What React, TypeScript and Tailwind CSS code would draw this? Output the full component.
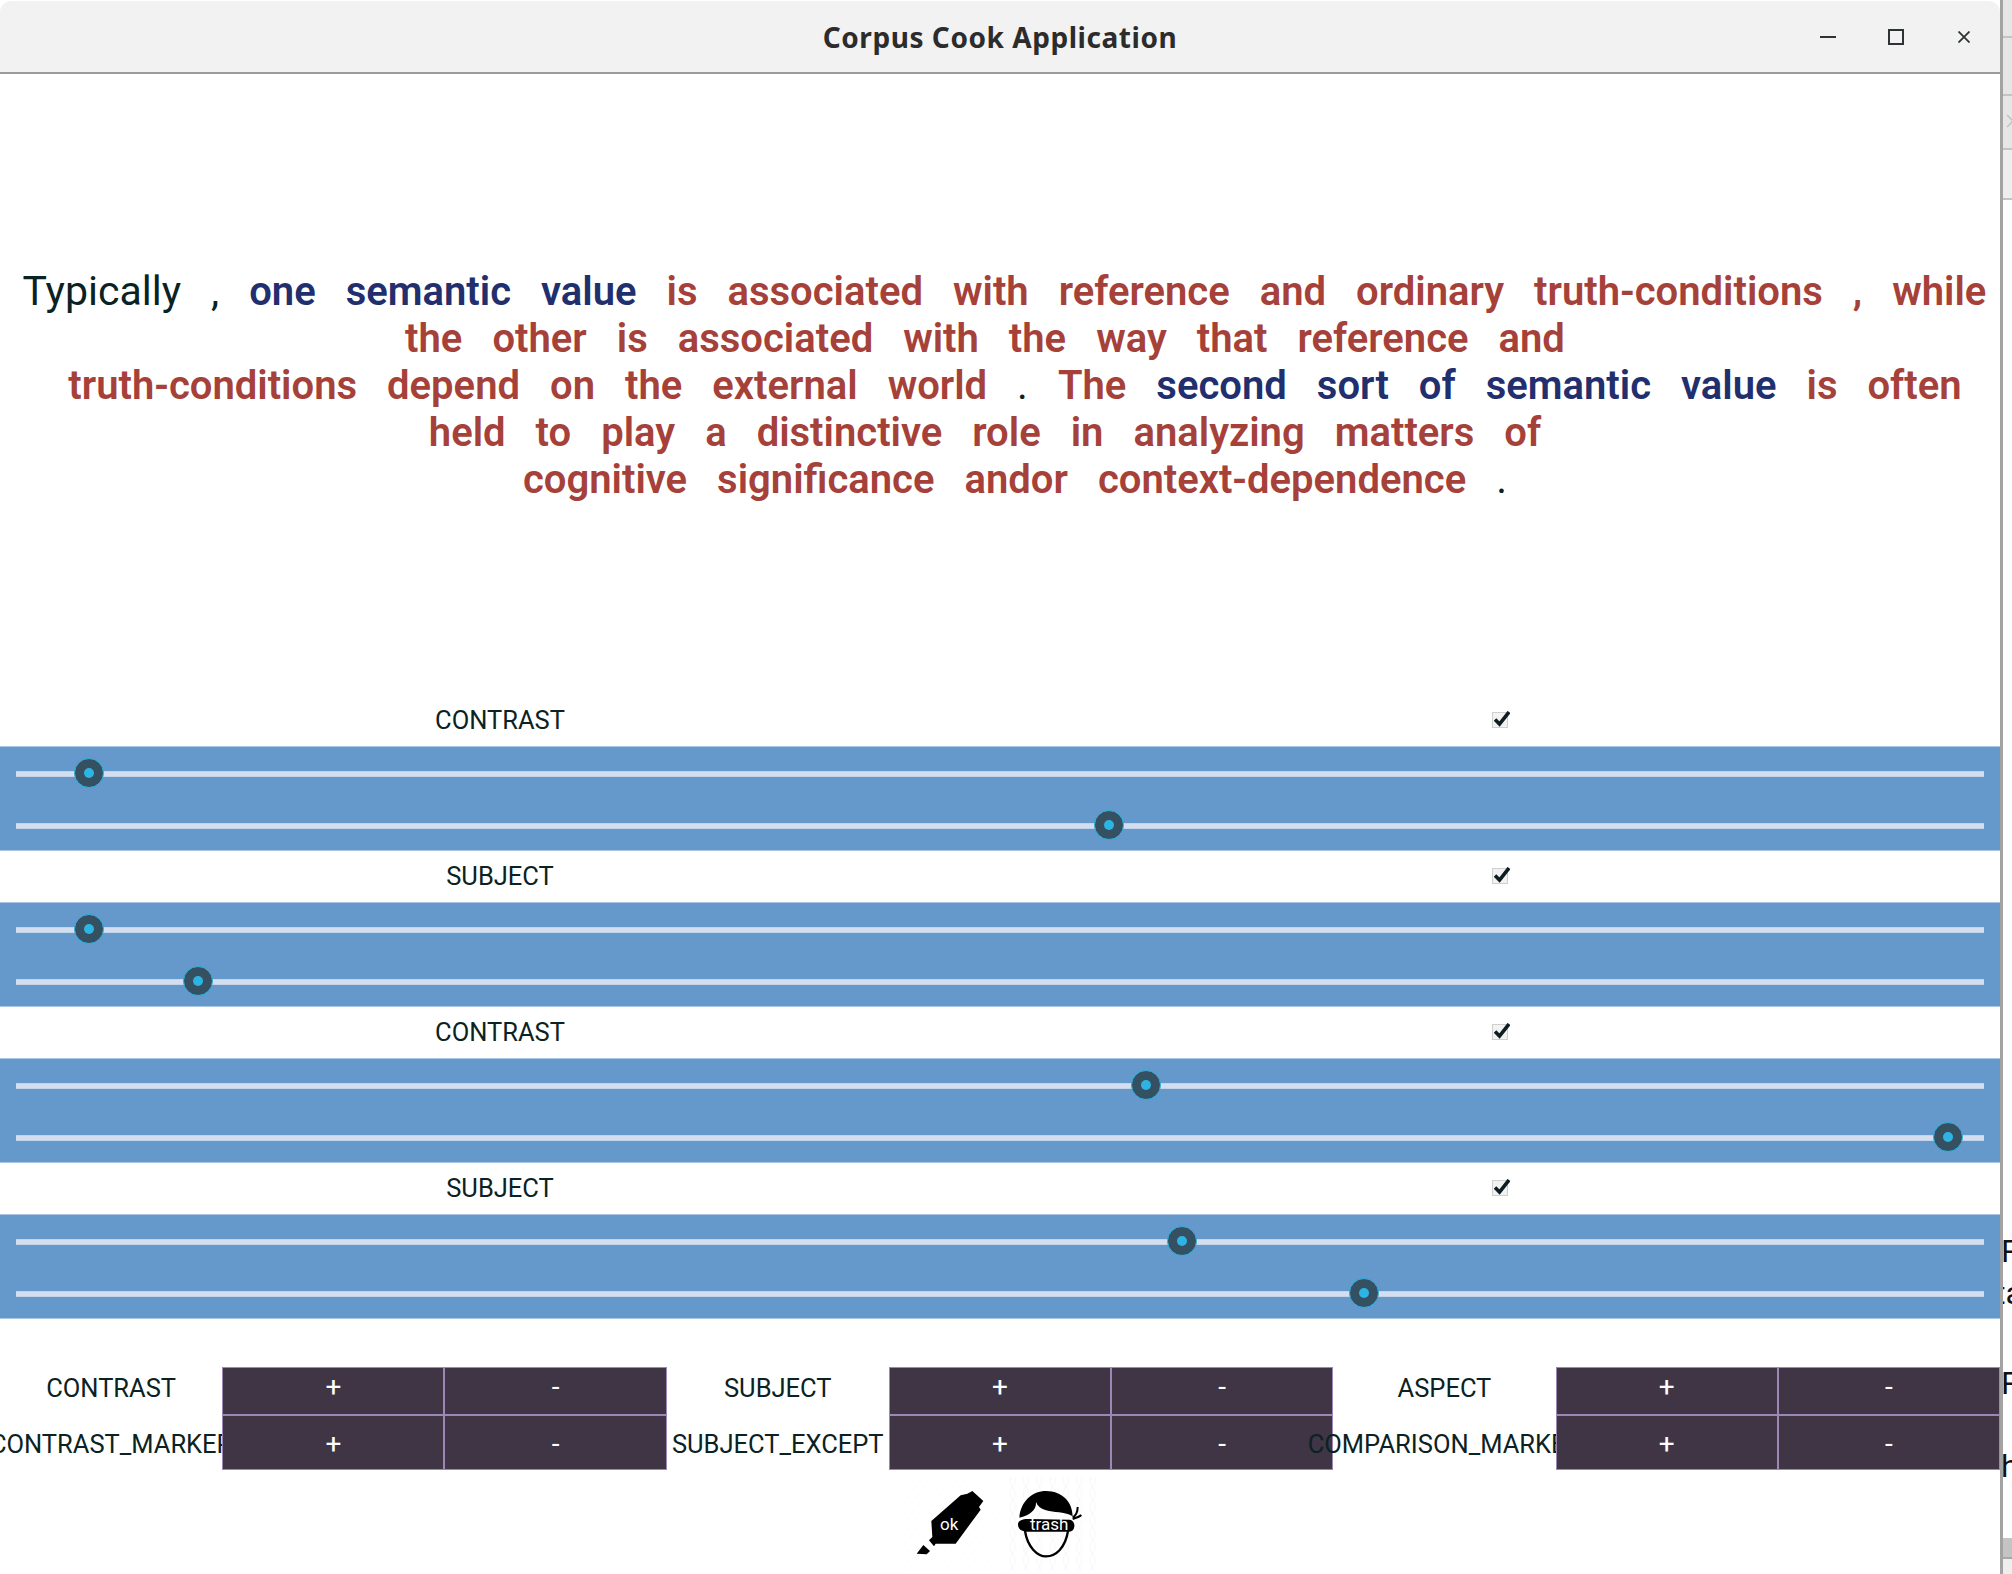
import React from "react";

const K = "text-[#0b2222] font-normal text-[41px]";
const B = "text-[#222f6e] font-semibold";
const R = "text-[#a6413a] font-semibold";

type Word = [string, string];

const lines: { pad: string; words: Word[] }[] = [
  {
    pad: "pl-[9px]",
    words: [
      ["Typically", K],
      [",", K],
      ["one", B],
      ["semantic", B],
      ["value", B],
      ["is", R],
      ["associated", R],
      ["with", R],
      ["reference", R],
      ["and", R],
      ["ordinary", R],
      ["truth-conditions", R],
      [",", R],
      ["while", R],
    ],
  },
  {
    pad: "pr-[30px]",
    words: [
      ["the", R],
      ["other", R],
      ["is", R],
      ["associated", R],
      ["with", R],
      ["the", R],
      ["way", R],
      ["that", R],
      ["reference", R],
      ["and", R],
    ],
  },
  {
    pad: "pl-[30px]",
    words: [
      ["truth-conditions", R],
      ["depend", R],
      ["on", R],
      ["the", R],
      ["external", R],
      ["world", R],
      [".", K],
      ["The", R],
      ["second", B],
      ["sort", B],
      ["of", B],
      ["semantic", B],
      ["value", B],
      ["is", R],
      ["often", R],
    ],
  },
  {
    pad: "pr-[30px]",
    words: [
      ["held", R],
      ["to", R],
      ["play", R],
      ["a", R],
      ["distinctive", R],
      ["role", R],
      ["in", R],
      ["analyzing", R],
      ["matters", R],
      ["of", R],
    ],
  },
  {
    pad: "pl-[30px]",
    words: [
      ["cognitive", R],
      ["significance", R],
      ["andor", R],
      ["context-dependence", R],
      [".", K],
    ],
  },
];

const sliderRows = [
  { label: "CONTRAST", a: 73, b: 1093 },
  { label: "SUBJECT", a: 73, b: 182 },
  { label: "CONTRAST", a: 1130, b: 1932 },
  { label: "SUBJECT", a: 1166, b: 1348 },
];

const Slider = ({ x }: { x: number }) => (
  <div className="relative h-[6px] w-[1968px] bg-[#d3dff0] border-y border-[#c3d3ea]">
    <div
      className="absolute top-[-14px] flex size-[30px] -translate-x-1/2 items-center justify-center rounded-full border border-[#2eb4e4] bg-[#345061]"
      style={{ left: x }}
    >
      <div className="size-[10px] rounded-full bg-[#2eb4e4]" />
    </div>
  </div>
);

const Check = () => (
  <div className="relative -mt-[1px] size-4 border border-[#cfcfcf] bg-[#f2f2f2]">
    <svg viewBox="0 0 16 16" className="absolute -top-[2px] left-[1px] size-4">
      <path d="M1 8.5 L5.5 13 L15 1" fill="none" stroke="#0d1d22" strokeWidth="3.6" />
    </svg>
  </div>
);

const bottomCells = [
  { label: "pb-[6px]", shift: "pb-[8px]", labels: ["CONTRAST", "SUBJECT", "ASPECT"] },
  { label: "pt-[4px]", shift: "pt-[2px]", labels: ["CONTRAST_MARKER", "SUBJECT_EXCEPT", "COMPARISON_MARKER"] },
];

const OkIcon = () => (
  <div className="relative ml-[3px] h-[95px] w-[95px]">
    <svg viewBox="130 50 285 285" className="size-full">
      <defs>
        <pattern id="okbg" width="18" height="18" patternUnits="userSpaceOnUse" patternTransform="rotate(35)">
          <path d="M0 0V18" stroke="#f9f9f9" strokeWidth="2" />
        </pattern>
      </defs>
      <rect x="130" y="50" width="285" height="285" fill="url(#okbg)" />
      <path d="M168 280 L188 254 L208 272 L198 282 Z" fill="#000" />
      <path d="M205 240 L215 230 L212 182 L300 105 L320 100 L335 92 L368 122 L355 140 L360 148 L285 250 L225 250 L220 258 Z" fill="#000" />
    </svg>
    <span className="absolute left-[36px] top-[39px] text-[17px] leading-none text-white">ok</span>
  </div>
);

const TrashIcon = () => (
  <div className="relative ml-[7px] h-[95px] w-[93px]">
    <svg viewBox="440 50 279 285" className="size-full">
      <defs>
        <pattern id="trbg" width="40" height="40" patternUnits="userSpaceOnUse">
          <circle cx="0" cy="20" r="28" fill="none" stroke="#f3f3f3" strokeWidth="2" />
          <circle cx="40" cy="20" r="28" fill="none" stroke="#f3f3f3" strokeWidth="2" />
        </pattern>
      </defs>
      <rect x="440" y="50" width="279" height="285" fill="url(#trbg)" />
      <path d="M480 172 C484 122 520 92 560 92 C608 92 640 125 640 168 C612 152 585 158 560 150 C545 145 535 138 530 125 C532 150 510 165 480 172 Z" fill="#000" />
      <path d="M476 192 C476 180 490 176 505 176 L632 178 C650 182 650 212 630 214 L500 214 C485 212 476 206 476 192 Z" fill="#000" />
      <path d="M497 212 C505 262 535 288 560 288 C590 288 618 262 626 212" fill="none" stroke="#000" strokeWidth="7" />
      <path d="M640 172 C650 165 655 155 655 140 M640 176 C652 172 660 170 666 164" fill="none" stroke="#000" strokeWidth="6" />
    </svg>
    <span className="absolute left-[24px] top-[39px] text-[17px] leading-none text-white">trash</span>
  </div>
);

export default function App() {
  return (
    <div className="flex h-[1574px] w-[2012px] overflow-hidden bg-white font-['Roboto',sans-serif]">
      <div className="flex w-[2000px] shrink-0 flex-col bg-white">
        <div className="relative flex h-[74px] shrink-0 items-center justify-center rounded-t-[12px] border-b-2 border-t border-[#9b9b98] border-t-white bg-[#f2f2f2]">
          <span className="mt-[1px] font-['Noto_Sans',sans-serif] text-[28px] font-bold tracking-[0.55px] text-[#2c2c2c]">
            Corpus Cook Application
          </span>
          <div className="absolute right-[30px] top-[28px] flex items-center gap-[52px]">
            <div className="h-[2px] w-4 bg-[#2e3436]" />
            <div className="mr-[2px] size-4 border-2 border-[#2e3436]" />
            <svg viewBox="0 0 12 12" className="size-3">
              <path d="M0.5 0.5 L11.5 11.5 M11.5 0.5 L0.5 11.5" stroke="#2e3436" strokeWidth="1.8" />
            </svg>
          </div>
        </div>

        <div className="flex h-[621px] shrink-0 flex-col justify-center pt-[2px] text-[40px] leading-[47px]">
          {lines.map((line, i) => (
            <div key={i} className={`flex items-baseline justify-center gap-[30px] whitespace-nowrap ${line.pad}`}>
              {line.words.map((w, j) => (
                <span key={j} className={w[1]}>
                  {w[0]}
                </span>
              ))}
            </div>
          ))}
        </div>

        {sliderRows.map((row, i) => (
          <div key={i} className="shrink-0">
            <div className="grid h-[51px] grid-cols-2 text-[25.5px] text-[#0b2222]">
              <div className="flex items-center justify-center">{row.label}</div>
              <div className="flex items-center justify-center">
                <Check />
              </div>
            </div>
            <div className="flex h-[105px] flex-col items-center gap-[46px] border-y border-[#a9c6e4] bg-[#6599cc] pt-[24px]">
              <Slider x={row.a} />
              <Slider x={row.b} />
            </div>
          </div>
        ))}

        <div className="mt-[48px] grid h-[103px] shrink-0 grid-cols-9 grid-rows-[48px_55px]">
          {bottomCells.map((row) =>
            row.labels.map((label) => (
              <React.Fragment key={label}>
                <div className={`relative flex items-center justify-center whitespace-nowrap text-[25.5px] text-[#0b2222] ${row.label}`}>
                  {label}
                </div>
                <div className={`relative flex items-center justify-center border border-[#9c87b5] bg-[#3f3545] text-[28px] text-white ${row.shift}`}>
                  +
                </div>
                <div className={`relative flex items-center justify-center border border-[#9c87b5] bg-[#3f3545] text-[28px] text-white ${row.shift}`}>
                  -
                </div>
              </React.Fragment>
            )),
          )}
        </div>

        <div className="mt-[7px] flex justify-center">
          <OkIcon />
          <TrashIcon />
        </div>
      </div>

      <div className="flex w-[12px] flex-col border-l-[3px] border-[#a3a3a3] text-[32px] leading-none text-[#111]">
        <div className="h-[38px] border-b-2 border-[#c4c4c4] bg-[#e6e6e6]" />
        <div className="h-[58px] border-b-2 border-[#c4c4c4] bg-[#e6e6e6]" />
        <div className="flex h-[54px] items-center overflow-hidden border-b-2 border-[#c4c4c4] bg-[#e6e6e6] pl-[4px]">
          <svg viewBox="0 0 12 16" className="h-4 w-3 shrink-0">
            <path d="M0 1 L12 13 M12 1 L0 13" stroke="#c0c0c0" strokeWidth="1.5" />
          </svg>
        </div>
        <div className="h-[50px] border-b-2 border-[#c4c4c4] bg-[#eeeeee]" />
        <div className="h-[1035px] bg-white" />
        <div className="h-[42px] overflow-hidden whitespace-nowrap">
          <span className="-ml-[2px] block">P</span>
        </div>
        <div className="h-[90px] overflow-hidden whitespace-nowrap">
          <span className="-ml-[8px] block">ta</span>
        </div>
        <div className="h-[83px] overflow-hidden whitespace-nowrap">
          <span className="-ml-[2px] block">P</span>
        </div>
        <div className="h-[88px] overflow-hidden whitespace-nowrap">
          <span className="-ml-[2px] block">h</span>
        </div>
        <div className="h-[21px] border-b-2 border-[#a8a8a8] bg-[#c4c4c4]" />
        <div className="flex-1 bg-[#eeeeee]" />
      </div>
    </div>
  );
}
